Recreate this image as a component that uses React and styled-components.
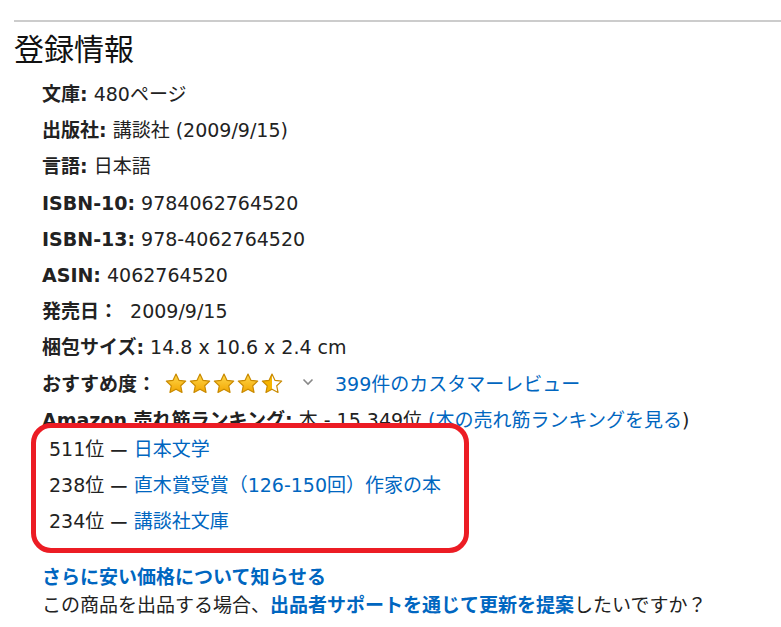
import React from 'react'
import styled, { createGlobalStyle } from 'styled-components'

const GlobalStyle = createGlobalStyle`
  html, body {
    margin: 0;
    padding: 0;
    background: #fff;
  }
  body {
    font-family: "DejaVu Sans", "Noto Sans CJK JP", sans-serif;
    color: #222;
  }
`

const details = [
  { label: '文庫:', value: '480ページ' },
  { label: '出版社:', value: '講談社 (2009/9/15)' },
  { label: '言語:', value: '日本語' },
  { label: 'ISBN-10:', value: '9784062764520' },
  { label: 'ISBN-13:', value: '978-4062764520' },
  { label: 'ASIN:', value: '4062764520' },
  { label: '発売日：', value: ' 2009/9/15' },
  { label: '梱包サイズ:', value: '14.8 x 10.6 x 2.4 cm' },
]

const ranks = [
  { pos: '511位', name: '日本文学' },
  { pos: '238位', name: '直木賞受賞（126-150回）作家の本' },
  { pos: '234位', name: '講談社文庫' },
]

const Star = ({ fill = 1, id }) => (
  <svg width="22" height="21" viewBox="0 0 24 23">
    <defs>
      <linearGradient id={`g${id}`} x1="0" y1="0" x2="0" y2="1">
        <stop offset="0" stopColor="#ffd84d" />
        <stop offset="1" stopColor="#f2a600" />
      </linearGradient>
      <linearGradient id={`h${id}`} x1="0" y1="0" x2="1" y2="0">
        <stop offset={fill} stopColor="#f7b500" />
        <stop offset={fill} stopColor="#fff" />
      </linearGradient>
    </defs>
    <path
      d="M12 1.2l3.2 6.8 7.4.9-5.4 5.1 1.4 7.3L12 17.7l-6.6 3.6 1.4-7.3L1.4 8.9l7.4-.9z"
      fill={fill === 1 ? `url(#g${id})` : `url(#h${id})`}
      stroke="#c98a00"
      strokeWidth="1.3"
      strokeLinejoin="round"
    />
  </svg>
)

const App = () => {
  return (
    <Page>
      <GlobalStyle />
      <Rule />
      <Heading>登録情報</Heading>
      <List>
        {details.map((d) => (
          <Row key={d.label}>
            <Label>{d.label}</Label> {d.value}
          </Row>
        ))}
        <Row>
          <Label>おすすめ度：</Label>
          <Stars>
            <Star id="1" />
            <Star id="2" />
            <Star id="3" />
            <Star id="4" />
            <Star id="5" fill={0.5} />
          </Stars>
          <Chevron width="12" height="8" viewBox="0 0 12 8">
            <polyline points="1.5,1.5 6,6 10.5,1.5" fill="none" stroke="#888" strokeWidth="1.6" />
          </Chevron>
          <Link href="#">399件のカスタマーレビュー</Link>
        </Row>
        <Row>
          <Label>Amazon 売れ筋ランキング:</Label> 本 - 15,349位 <Link href="#">(本の売れ筋ランキングを見る</Link>)
        </Row>
      </List>
      <RankBox>
        {ranks.map((r) => (
          <Row key={r.pos}>
            {r.pos} <Dash>—</Dash> <Link href="#">{r.name}</Link>
          </Row>
        ))}
      </RankBox>
      <Notes>
        <NoteLine>
          <StrongLink href="#">さらに安い価格について知らせる</StrongLink>
        </NoteLine>
        <NoteLine>
          この商品を出品する場合、<StrongLink href="#">出品者サポートを通じて更新を提案</StrongLink>したいですか？
        </NoteLine>
      </Notes>
    </Page>
  )
}

export default App

const Page = styled.div`
  padding: 20px 0 0 14px;
  font-size: 19px;
  width: 767px;
  overflow: hidden;
`

const Rule = styled.div`
  height: 2px;
  background: #cccccc;
`

const Heading = styled.h2`
  margin: 6px 0 0;
  font-size: 30px;
  font-weight: normal;
  line-height: 39px;
  color: #111;
  font-family: "Noto Sans CJK JP", sans-serif;
`

const List = styled.ul`
  list-style: none;
  margin: 9px 0 0;
  padding: 0 0 0 28px;
`

const Row = styled.li`
  line-height: 36.2px;
  height: 36.2px;
  white-space: pre;
`

const Label = styled.b`
  font-weight: bold;
  color: #222;
`

const Link = styled.a`
  color: #0066c0;
  text-decoration: none;
`

const StrongLink = styled(Link)`
  font-weight: bold;
`

const Dash = styled.span`
  font-family: "Noto Sans CJK JP", sans-serif;
  font-weight: bold;
`

const Stars = styled.span`
  display: inline-flex;
  gap: 2px;
  margin-left: 9px;
  vertical-align: middle;
  position: relative;
  top: -2px;
`

const Chevron = styled.svg`
  margin: 0 21px 0 19px;
  vertical-align: middle;
  position: relative;
  top: -3px;
`

const RankBox = styled.ul`
  list-style: none;
  position: relative;
  margin: -15px 0 0 17px;
  padding: 2px 0 10px 13px;
  width: 438px;
  box-sizing: border-box;
  border: 5px solid #ec1c24;
  border-radius: 20px;
  background: #fff;
  ${Row} {
    line-height: 36px;
    height: 36px;
  }
`

const Notes = styled.div`
  margin: 10px 0 0 28px;
`

const NoteLine = styled.div`
  line-height: 28px;
  white-space: nowrap;
`
